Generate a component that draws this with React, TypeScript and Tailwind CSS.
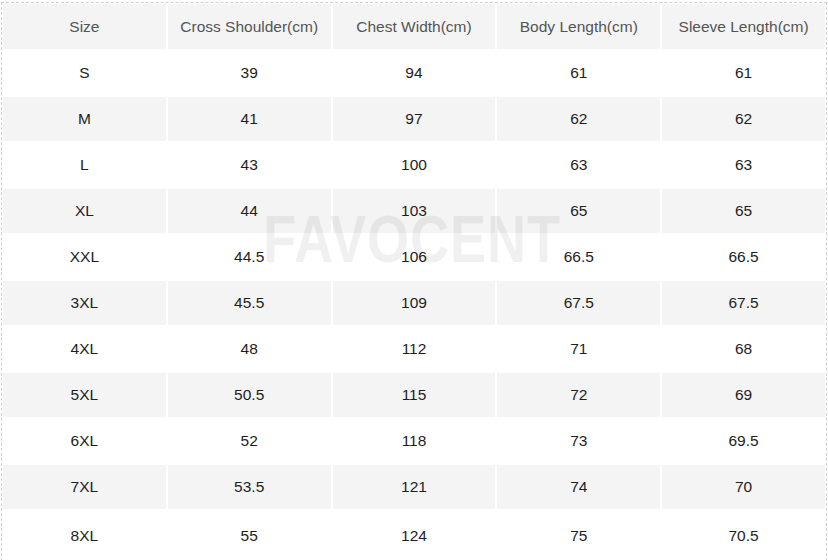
const headers = [
  "Size",
  "Cross Shoulder(cm)",
  "Chest Width(cm)",
  "Body Length(cm)",
  "Sleeve Length(cm)",
];

const rows: string[][] = [
  ["S", "39", "94", "61", "61"],
  ["M", "41", "97", "62", "62"],
  ["L", "43", "100", "63", "63"],
  ["XL", "44", "103", "65", "65"],
  ["XXL", "44.5", "106", "66.5", "66.5"],
  ["3XL", "45.5", "109", "67.5", "67.5"],
  ["4XL", "48", "112", "71", "68"],
  ["5XL", "50.5", "115", "72", "69"],
  ["6XL", "52", "118", "73", "69.5"],
  ["7XL", "53.5", "121", "74", "70"],
  ["8XL", "55", "124", "75", "70.5"],
];

export default function App() {
  return (
    <div className="h-[560px] w-[828px] overflow-hidden bg-white font-['Liberation_Sans',Arial,sans-serif]">
      <div className="relative ml-[1px] mt-[2px] w-[826px] border border-b-0 border-dashed border-[#cfcfcf] px-[1px]">
        <div className="grid grid-cols-5 gap-x-[2px] gap-y-[2px] pt-[1px] [grid-template-rows:45px_repeat(10,44px)_50px]">
          {headers.map((label) => (
            <div
              className="flex items-center justify-center bg-[#f4f4f4] text-[15.5px] text-[#555]"
              key={label}
            >
              {label}
            </div>
          ))}
          {rows.map((row, index) =>
            row.map((value, col) => (
              <div
                className={`flex items-center justify-center text-[15.5px] text-[#1e1e1e] ${
                  index % 2 === 1 ? "bg-[#f4f4f4]" : "bg-white"
                }`}
                key={`${index}-${col}`}
              >
                {value}
              </div>
            )),
          )}
        </div>

        <div className="pointer-events-none absolute left-0 top-[202px] flex w-[820px] justify-center">
          <span className="inline-block scale-x-[0.81] text-[67px] font-bold leading-none tracking-[1px] text-black/[0.06]">
            FAVOCENT
          </span>
        </div>
      </div>
    </div>
  );
}
